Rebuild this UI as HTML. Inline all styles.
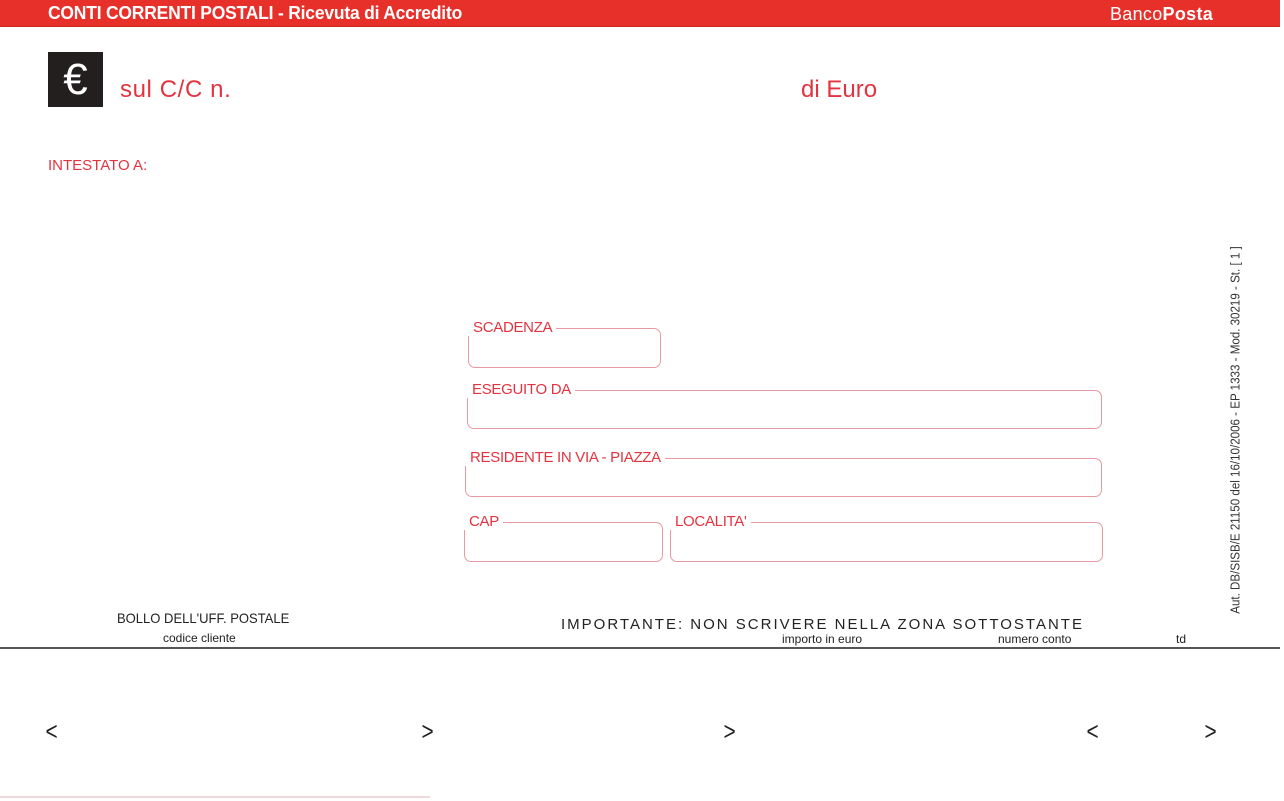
<!DOCTYPE html>
<html><head><meta charset="utf-8"><style>
*{margin:0;padding:0;box-sizing:border-box}
body{width:1284px;height:801px;background:#fff;position:relative;overflow:hidden;font-family:"Liberation Sans",sans-serif}
.a{position:absolute;white-space:nowrap}
.bar{left:0;top:0;width:1280px;height:27px;background:#e8302a;border-bottom:1px solid #c22}
.r{color:#e3333f}
.box{position:absolute;border:1.3px solid #e89aa3;border-radius:7px}
.lbl{position:absolute;color:#e3333f;font-size:15px;background:#fff;padding:0 4px 0 6px;top:-9px;left:-2px;line-height:16px;letter-spacing:-0.3px}
.arr{font-size:26px;color:#222;top:716px;transform:scaleX(0.8)}
</style></head><body>
<div class="a bar"></div>
<div class="a" style="left:48px;top:3px;color:#fff;font-weight:bold;font-size:18px;letter-spacing:-0.2px;transform:scaleX(0.97);transform-origin:left">CONTI CORRENTI POSTALI - Ricevuta di Accredito</div>
<div class="a" style="left:1110px;top:4px;color:#fff;font-size:18px;letter-spacing:0.3px">Banco<b>Posta</b></div>

<div class="a" style="left:48px;top:52px;width:55px;height:55px;background:#231f1f;color:#fff;font-size:44px;line-height:55px;text-align:center">€</div>
<div class="a r" style="left:120px;top:76px;font-size:24px;letter-spacing:0.6px">sul C/C n.</div>
<div class="a r" style="left:801px;top:76px;font-size:24px">di Euro</div>
<div class="a r" style="left:48px;top:157px;font-size:15px">INTESTATO A:</div>

<div class="box" style="left:468px;top:328px;width:193px;height:40px"><span class="lbl">SCADENZA</span></div>
<div class="box" style="left:467px;top:390px;width:635px;height:39px"><span class="lbl">ESEGUITO DA</span></div>
<div class="box" style="left:465px;top:458px;width:637px;height:39px"><span class="lbl">RESIDENTE IN VIA - PIAZZA</span></div>
<div class="box" style="left:464px;top:522px;width:199px;height:40px"><span class="lbl">CAP</span></div>
<div class="box" style="left:670px;top:522px;width:433px;height:40px"><span class="lbl">LOCALITA'</span></div>

<div class="a" style="left:1235px;top:430px;font-size:13px;color:#333;transform:translate(-50%,-50%) rotate(-90deg) scaleX(0.89)">Aut. DB/SISB/E 21150 del 16/10/2006 - EP 1333 - Mod. 30219 - St. [ 1 ]</div>

<div class="a" style="left:117px;top:610px;font-size:14px;color:#222;transform:scaleX(0.93);transform-origin:left">BOLLO DELL'UFF. POSTALE</div>
<div class="a" style="left:163px;top:631px;font-size:12px;color:#222">codice cliente</div>
<div class="a" style="left:561px;top:616px;font-size:15px;color:#222;letter-spacing:2px">IMPORTANTE: NON SCRIVERE NELLA ZONA SOTTOSTANTE</div>
<div class="a" style="left:782px;top:632px;font-size:12px;color:#222">importo in euro</div>
<div class="a" style="left:998px;top:632px;font-size:12px;color:#222">numero conto</div>
<div class="a" style="left:1176px;top:632px;font-size:12px;color:#222">td</div>
<div class="a" style="left:0;top:647px;width:1280px;height:2px;background:#555"></div>

<div class="a arr" style="left:44px">&lt;</div>
<div class="a arr" style="left:420px">&gt;</div>
<div class="a arr" style="left:722px">&gt;</div>
<div class="a arr" style="left:1085px">&lt;</div>
<div class="a arr" style="left:1203px">&gt;</div>
<div class="a" style="left:0;top:796px;width:430px;height:2px;background:#f0d8dc"></div>
</body></html>
